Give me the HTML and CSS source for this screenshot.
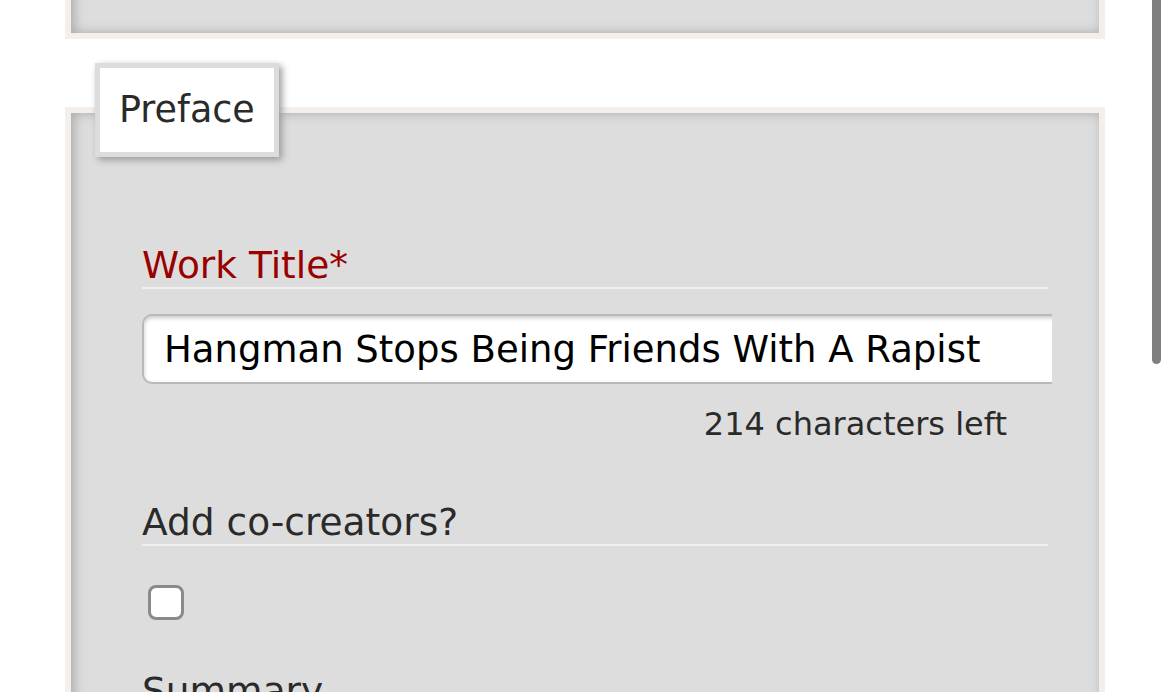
FILE: index.html
```html
<!DOCTYPE html>
<html lang="en">
<head>
<meta charset="utf-8">
<title>Preface</title>
<link rel="stylesheet" href="styles.css">
</head>
<body>
<div class="page">
  <fieldset class="box box-prev"></fieldset>
  <fieldset class="box box-preface">
    <legend class="legend">Preface</legend>
    <div class="fields">
      <div class="field-label required">Work Title*</div>
      <div class="input-clip">
        <div class="text-input">Hangman Stops Being Friends With A Rapist</div>
      </div>
      <div class="counter">214 characters left</div>
      <div class="field-label">Add co-creators?</div>
      <div class="check-row"><span class="checkbox"></span></div>
      <div class="field-label">Summary</div>
    </div>
  </fieldset>
  <div class="scrollbar"></div>
</div>
</body>
</html>
```

FILE: styles.css
```css
html, body {
  margin: 0;
  padding: 0;
  background: #fff;
  overflow: hidden;
  height: 692px;
}
.page {
  position: relative;
  padding-left: 65px;
  width: 1040px;
  font-family: "DejaVu Sans", Verdana, sans-serif;
  color: #2a2a2a;
}
.box {
  margin: 0;
  background: #ddd;
  border: 6px solid #f3efec;
  box-shadow: inset 3px 0 12px #a9a9a9;
  min-width: 0;
}
.box-prev {
  height: 100px;
  margin-top: -73px;
  padding: 0;
}
.box-preface {
  margin-top: 24px;
  padding: 0 51px 0 24px;
}
.legend {
  background: #fff;
  border: 5px solid #dcdcdc;
  box-shadow: 3px 3px 7px #9a9a9a;
  padding: 0 19px;
  font-size: 36.5px;
  line-height: 84px;
  color: #2a2a2a;
}
.fields {
  padding: 86px 0 40px 47px;
}
.field-label {
  font-size: 37.5px;
  line-height: 44px;
  padding-bottom: 0;
  border-bottom: 2px solid #f0f0f0;
  color: #2a2a2a;
}
.required {
  color: #990000;
}
.input-clip {
  margin-top: 25px;
  width: 910px;
  overflow: hidden;
}
.text-input {
  width: 1000px;
  height: 66px;
  border: 2px solid #b9b9b9;
  border-radius: 10px 0 0 10px;
  background: #fff;
  box-shadow: inset 0 2px 4px #c8c8c8;
  font-size: 37px;
  line-height: 68px;
  padding-left: 20px;
  color: #000;
  box-sizing: content-box;
  white-space: nowrap;
}
.counter {
  text-align: right;
  font-size: 32px;
  line-height: 40px;
  padding-right: 41px;
  margin-top: 20px;
  margin-bottom: 56px;
}
.check-row {
  padding: 39px 0 49px 6px;
}
.checkbox {
  display: block;
  width: 30px;
  height: 29px;
  border: 3px solid #8a8a8a;
  border-radius: 8px;
  background: #fff;
}
.scrollbar {
  position: absolute;
  left: 1152px;
  top: 29px;
  width: 9px;
  height: 408px;
  border-radius: 5px;
  background: #7f7f7f;
}
```
